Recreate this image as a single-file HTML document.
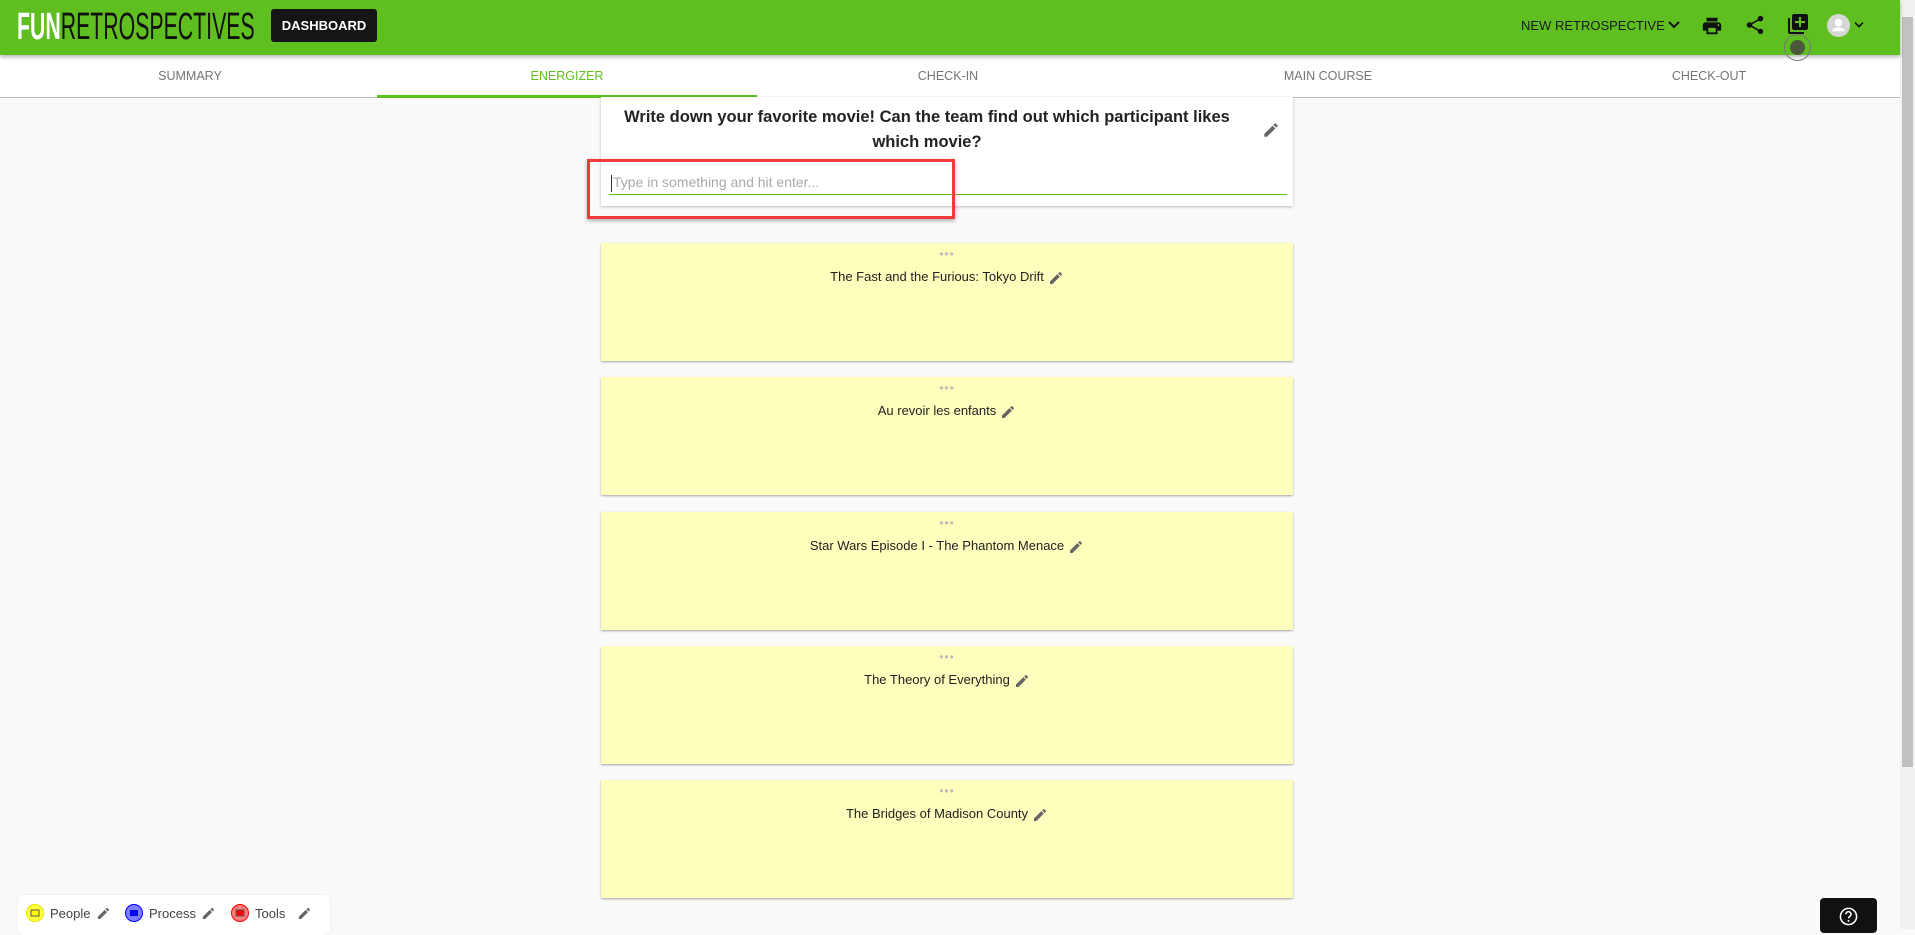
<!DOCTYPE html>
<html><head><meta charset="utf-8"><style>
*{box-sizing:border-box;margin:0;padding:0}
body{width:1915px;height:929px;overflow:hidden;background:#fafafa;font-family:"Liberation Sans",Roboto,sans-serif;position:relative}
.hdr{position:absolute;left:0;top:0;width:1900px;height:55px;background:#5fbf21;box-shadow:0 2px 4px rgba(0,0,0,.3);z-index:3}
.logo{position:absolute;left:17px;top:7px;font-family:"Liberation Sans",sans-serif;font-size:38px;letter-spacing:0;transform:scaleX(.56);transform-origin:left;white-space:nowrap;line-height:40px}
.logo b{color:#fff;font-weight:bold}.logo span{color:#111}
.dash{position:absolute;left:271px;top:9px;width:106px;height:33px;background:#151515;border-radius:3px;color:#fff;font-weight:bold;font-size:13px;text-align:center;line-height:33px}
.newr{position:absolute;left:1521px;top:18px;font-size:13px;color:#1a1a1a}
.tabs{position:absolute;left:0;top:55px;width:1900px;height:43px;background:#fff;border-bottom:1px solid #bdbdbd}
.tab{position:absolute;top:0;width:380px;height:42px;text-align:center;line-height:42px;font-size:12.5px;color:#757575}
.tab.on{color:#5fbf21;border-bottom:3px solid #5fbf21;height:43px}
.sb{position:absolute;left:1900px;top:0;width:15px;height:929px;background:#f1f1f1}
.sb i{position:absolute;left:2px;top:17px;width:11px;height:750px;background:#c1c1c1}
.card{position:absolute;left:601px;top:97px;width:692px;height:109px;background:#fff;box-shadow:0 1px 3px rgba(0,0,0,.25)}
.q{position:absolute;left:12px;top:8px;width:628px;text-align:center;font-weight:bold;font-size:16.5px;color:#222;line-height:25px}
.inp{position:absolute;left:8px;top:77px;width:678px;height:21px;border-bottom:1px solid #5fbf21;font-size:14px;color:#aaa;padding-left:2px;border-left:0}
.inp:before{content:"";display:inline-block;width:1px;height:17px;background:#333;vertical-align:middle;margin-right:1px}
.red{position:absolute;left:587px;top:159px;width:368px;height:60px;border:3px solid #ee3b3b;box-shadow:0 2px 4px rgba(0,0,0,.3)}
.note{position:absolute;left:601px;width:692px;height:118px;background:#ffffbd;box-shadow:0 1px 2px rgba(0,0,0,.35);text-align:center}
.note .d{position:absolute;left:0;right:0;top:4px;color:#bbb;font-size:12px;letter-spacing:1px}
.note .t{position:absolute;left:0;right:0;top:26px;font-size:13px;color:#222}
.pen{display:inline-block;vertical-align:middle;margin-left:4px}
.leg{position:absolute;left:18px;top:895px;width:312px;height:40px;background:#fff;border-radius:5px;box-shadow:0 0 2px rgba(0,0,0,.1);font-size:13px;color:#444}
.help{position:absolute;left:1820px;top:898px;width:57px;height:35px;background:#111;border-radius:4px}
</style></head><body>
<div class="hdr">
<div class="logo"><b>FUN</b><span>RETROSPECTIVES</span></div>
<div class="dash">DASHBOARD</div>
<div class="newr">NEW RETROSPECTIVE <svg width="12" height="10" viewBox="0 0 12 10"><path d="M1 2l5 5 5-5" stroke="#111" stroke-width="2" fill="none"/></svg></div>
<svg style="position:absolute;left:1701px;top:15px" width="22" height="22" viewBox="0 0 24 24"><path fill="#111" d="M19 8H5c-1.66 0-3 1.34-3 3v6h4v4h12v-4h4v-6c0-1.66-1.34-3-3-3zm-3 11H8v-5h8v5zm3-7c-.55 0-1-.45-1-1s.45-1 1-1 1 .45 1 1-.45 1-1 1zm-1-9H6v4h12V3z"/></svg>
<svg style="position:absolute;left:1744px;top:14px" width="22" height="22" viewBox="0 0 24 24"><path fill="#111" d="M18 16.08c-.76 0-1.440.3-1.96.77L8.91 12.7c.05-.23.09-.46.09-.7s-.04-.47-.09-.7l7.05-4.11c.54.5 1.25.81 2.040.81 1.66 0 3-1.34 3-3s-1.34-3-3-3-3 1.34-3 3c0 .24.04.47.09.7L8.04 9.81C7.5 9.31 6.79 9 6 9c-1.66 0-3 1.34-3 3s1.34 3 3 3c.79 0 1.5-.31 2.04-.81l7.12 4.16c-.05.21-.08.43-.08.65 0 1.61 1.31 2.92 2.92 2.92 1.61 0 2.92-1.31 2.92-2.92s-1.31-2.92-2.92-2.92z"/></svg>
<svg style="position:absolute;left:1786px;top:12px" width="24" height="24" viewBox="0 0 24 24"><path fill="#111" d="M4 6H2v14c0 1.1.9 2 2 2h14v-2H4V6zm16-4H8c-1.1 0-2 .9-2 2v12c0 1.1.9 2 2 2h12c1.1 0 2-.9 2-2V4c0-1.1-.9-2-2-2zm-1 9h-4v4h-2v-4H9V9h4V5h2v4h4v2z"/></svg>
<div style="position:absolute;left:1784px;top:34px;width:27px;height:27px;border-radius:50%;border:1px solid #777"><div style="margin:5px;width:15px;height:15px;border-radius:50%;background:#4a5a3a"></div></div>
<svg style="position:absolute;left:1827px;top:14px" width="23" height="23" viewBox="0 0 24 24"><circle cx="12" cy="12" r="12" fill="#d6d6d6"/><circle cx="12" cy="9" r="4" fill="#fff"/><path d="M5 18c1-3 4-4 7-4s6 1 7 4z" fill="#fff"/></svg>
<svg style="position:absolute;left:1854px;top:21px" width="10" height="8" viewBox="0 0 12 10"><path d="M1 2l5 5 5-5" stroke="#111" stroke-width="2" fill="none"/></svg>
</div>
<div class="tabs">
<div class="tab" style="left:0">SUMMARY</div>
<div class="tab on" style="left:377px">ENERGIZER</div>
<div class="tab" style="left:758px">CHECK-IN</div>
<div class="tab" style="left:1138px">MAIN COURSE</div>
<div class="tab" style="left:1519px">CHECK-OUT</div>
</div>
<div class="card">
<div class="q">Write down your favorite movie! Can the team find out which participant likes which movie?</div>
<svg style="position:absolute;left:661px;top:24px" width="18" height="18" viewBox="0 0 24 24"><path fill="#666" d="M3 17.25V21h3.75L17.81 9.94l-3.75-3.75L3 17.25zM20.71 7.04a1 1 0 000-1.41l-2.34-2.34a1 1 0 00-1.41 0l-1.830 1.83 3.75 3.75 1.83-1.83z"/></svg>
<div class="inp">Type in something and hit enter...</div>
</div>
<div class="red"></div>
<div class="note" style="top:243px"><div class="d">•••</div><div class="t">The Fast and the Furious: Tokyo Drift<svg class="pen" width="16" height="16" viewBox="0 0 24 24"><path fill="#666" d="M3 17.25V21h3.75L17.81 9.94l-3.75-3.75L3 17.25zM20.71 7.04a1 1 0 000-1.41l-2.34-2.34a1 1 0 00-1.41 0l-1.83 1.83 3.75 3.75 1.83-1.83z"/></svg></div></div>
<div class="note" style="top:377px"><div class="d">•••</div><div class="t">Au revoir les enfants<svg class="pen" width="16" height="16" viewBox="0 0 24 24"><path fill="#666" d="M3 17.25V21h3.75L17.81 9.94l-3.75-3.75L3 17.25zM20.71 7.04a1 1 0 000-1.41l-2.34-2.34a1 1 0 00-1.41 0l-1.83 1.83 3.75 3.75 1.83-1.83z"/></svg></div></div>
<div class="note" style="top:512px"><div class="d">•••</div><div class="t">Star Wars Episode I - The Phantom Menace<svg class="pen" width="16" height="16" viewBox="0 0 24 24"><path fill="#666" d="M3 17.25V21h3.75L17.81 9.94l-3.75-3.75L3 17.25zM20.71 7.04a1 1 0 000-1.41l-2.34-2.34a1 1 0 00-1.41 0l-1.83 1.83 3.75 3.75 1.83-1.83z"/></svg></div></div>
<div class="note" style="top:646px"><div class="d">•••</div><div class="t">The Theory of Everything<svg class="pen" width="16" height="16" viewBox="0 0 24 24"><path fill="#666" d="M3 17.25V21h3.75L17.81 9.94l-3.75-3.75L3 17.25zM20.71 7.04a1 1 0 000-1.41l-2.34-2.34a1 1 0 00-1.41 0l-1.83 1.83 3.75 3.75 1.83-1.83z"/></svg></div></div>
<div class="note" style="top:780px"><div class="d">•••</div><div class="t">The Bridges of Madison County<svg class="pen" width="16" height="16" viewBox="0 0 24 24"><path fill="#666" d="M3 17.25V21h3.75L17.81 9.94l-3.75-3.75L3 17.25zM20.71 7.04a1 1 0 000-1.41l-2.34-2.34a1 1 0 00-1.41 0l-1.83 1.83 3.75 3.75 1.83-1.83z"/></svg></div></div>
<div class="leg">
<svg style="position:absolute;left:8px;top:9px" width="312" height="20" viewBox="0 0 312 20">
<circle cx="9" cy="9" r="8.5" fill="#ffff40" stroke="#e5e500"/><rect x="5" y="6" width="8" height="6" fill="#ffff00" stroke="#555" stroke-width="1"/>
<text x="24" y="14" font-size="13" fill="#444" font-family="Liberation Sans">People</text>
<path transform="translate(70,2) scale(.62)" fill="#666" d="M3 17.25V21h3.75L17.81 9.94l-3.75-3.75L3 17.25zM20.71 7.04a1 1 0 000-1.41l-2.34-2.34a1 1 0 00-1.41 0l-1.83 1.83 3.75 3.75 1.83-1.83z"/>
<circle cx="108" cy="9" r="8.5" fill="#7d7dff" stroke="#00f"/><rect x="104" y="6" width="8" height="6" fill="#00f"/>
<text x="123" y="14" font-size="13" fill="#444" font-family="Liberation Sans">Process</text>
<path transform="translate(175,2) scale(.62)" fill="#666" d="M3 17.25V21h3.75L17.81 9.94l-3.75-3.75L3 17.25zM20.71 7.04a1 1 0 000-1.41l-2.34-2.34a1 1 0 00-1.41 0l-1.83 1.83 3.75 3.75 1.83-1.83z"/>
<circle cx="214" cy="9" r="8.5" fill="#ff7d7d" stroke="#f00"/><rect x="210" y="6" width="8" height="6" fill="#f00" stroke="#555"/>
<text x="229" y="14" font-size="13" fill="#444" font-family="Liberation Sans">Tools</text>
<path transform="translate(271,2) scale(.62)" fill="#666" d="M3 17.25V21h3.75L17.81 9.94l-3.75-3.75L3 17.25zM20.71 7.04a1 1 0 000-1.41l-2.34-2.34a1 1 0 00-1.41 0l-1.83 1.83 3.75 3.75 1.83-1.83z"/>
</svg></div>
<div class="help"><svg style="position:absolute;left:19px;top:9px" width="19" height="19" viewBox="0 0 20 20"><circle cx="10" cy="10" r="8.5" stroke="#fff" stroke-width="1.6" fill="none"/><path d="M7.3 7.7a2.7 2.7 0 115 1.3c-.8 1-2.3 1.3-2.3 3" stroke="#fff" stroke-width="1.6" fill="none"/><circle cx="10" cy="14.6" r="1" fill="#fff"/></svg></div>
<div class="sb"><i></i></div>
</body></html>
